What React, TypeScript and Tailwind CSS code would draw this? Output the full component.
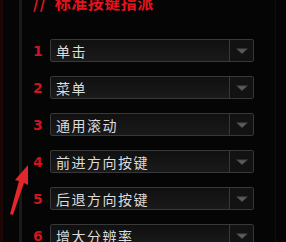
import React from 'react';

const ROWS = ['单击', '菜单', '通用滚动', '前进方向按键', '后退方向按键', '增大分辨率'];

function DropArrow() {
  return (
    <svg width="14" height="8" viewBox="0 0 14 8">
      <path d="M1 1.5 L13 1.5 L7 7 Z" fill="#4a4a4a" />
      <path d="M3 2.5 L11 2.5 L7 6 Z" fill="#5c5c5c" />
    </svg>
  );
}

function Row({ index, label }: { index: number; label: string }) {
  return (
    <div className="flex items-center h-[23px]">
      <span
        className="w-[17px] text-[14px] font-bold text-[#d0141e] leading-none"
        style={{ fontFamily: '"DejaVu Sans", sans-serif' }}
      >
        {index}
      </span>
      <div className="flex w-[204px] h-[23px] rounded-[2px] border border-[#383838] bg-gradient-to-b from-[#101010] to-[#1a1a1a]">
        <div className="flex-1 flex items-center pl-[5px] text-[14px] tracking-[1.5px] text-[#dcdcdc] leading-none">
          {label}
        </div>
        <div className="w-[24px] border-l border-[#383838] flex items-center justify-center bg-[#121212]">
          <DropArrow />
        </div>
      </div>
    </div>
  );
}

export default function App() {
  return (
    <div
      className="relative w-[286px] h-[242px] bg-[#050505] overflow-hidden flex"
      style={{ fontFamily: '"Noto Sans CJK SC", "Noto Sans", sans-serif' }}
    >
      <div className="w-[3px] bg-[#1c0606]" />
      <div className="w-[16px]" />
      <div className="w-[3px] bg-[#1a1a1a]" />
      <div className="flex-1 pl-[11px]">
        <div className="-mt-[6px] h-[16px] text-[16px] leading-[16px] font-bold text-[#e4141e] tracking-[0.5px] whitespace-nowrap">
          //&nbsp;&nbsp;标准按键指派
        </div>
        <div className="mt-[29px] flex flex-col gap-[14px]">
          {ROWS.map((label, i) => (
            <Row key={label} index={i + 1} label={label} />
          ))}
        </div>
      </div>
      <div className="w-[1px] bg-[#0e0e0e] mr-[10px]" />

      {/* annotation arrow */}
      <svg className="absolute left-0 top-0" width="286" height="242" viewBox="0 0 286 242">
        <path d="M10 214 L19 181 L15 180 L28 165 L28 185 L24 183 L13 215 Z" fill="#e0282c" />
      </svg>
    </div>
  );
}
